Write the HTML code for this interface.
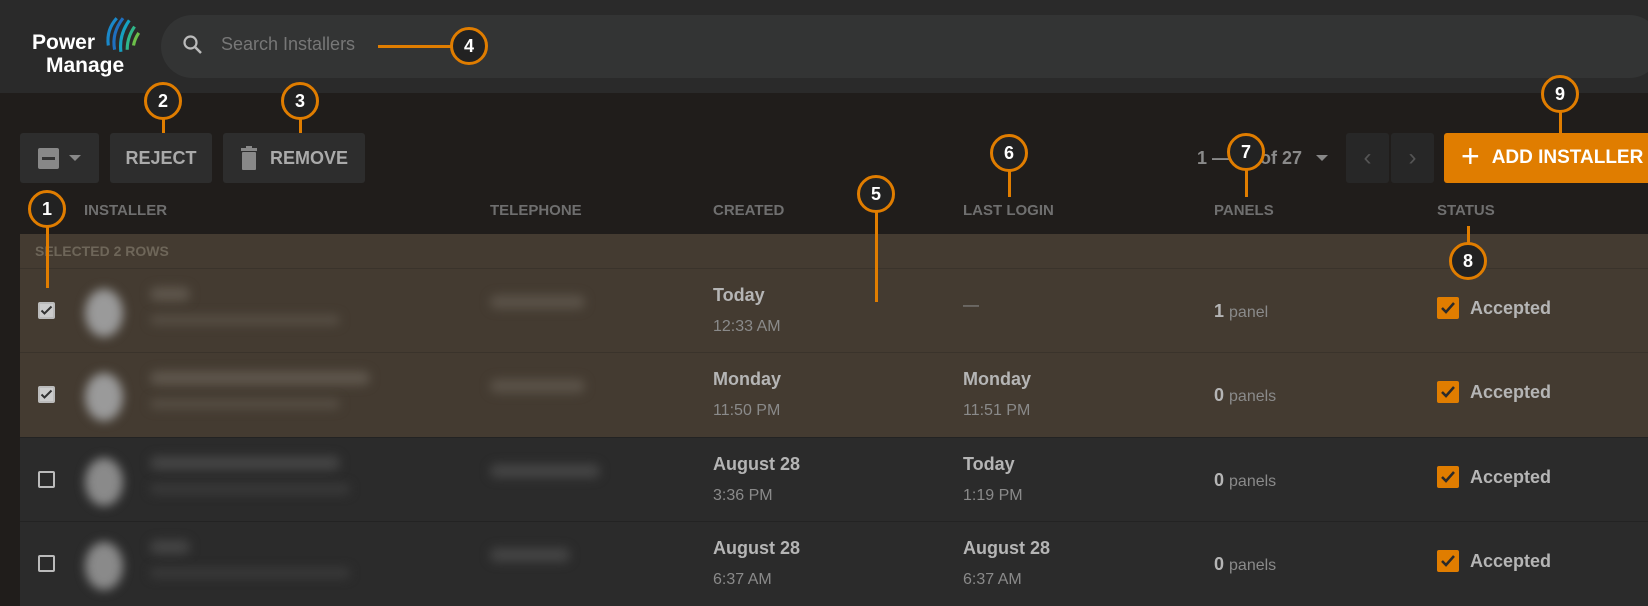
<!DOCTYPE html><html><head><style>
*{box-sizing:border-box;margin:0;padding:0}
body{width:1648px;height:606px;background:#201d1b;font-family:"Liberation Sans",sans-serif;position:relative;overflow:hidden;color:#bbb}
.a{position:absolute}
.hdr{left:0;top:0;width:1648px;height:93px;background:#2a2a2a}
.search{left:161px;top:15px;width:1500px;height:63px;background:#333434;border-radius:32px}
.btn{background:#2d2d2d;border-radius:3px;color:#aaa;font-weight:bold;font-size:18px;display:flex;align-items:center;justify-content:center}
.th{top:202px;font-size:15px;font-weight:bold;color:#6f6f6f}
.row{left:20px;width:1628px;height:85px;border-top:1px solid #3a332b}
.sel{background:#443b31}
.uns{background:#2b2b2b;border-top:1px solid #232323}
.cb{left:18px;width:17px;height:17px;border:2px solid #bbb;border-radius:2px}
.cb.on{background:#ccc;}
.blur{filter:blur(5px);background:#777;border-radius:10px}
.d1{font-size:18px;font-weight:bold;color:#b5b5b5}
.d2{font-size:16px;color:#8a8a8a;font-weight:normal}
.st{left:1437px;width:22px;height:22px;background:#e07d00;border-radius:2px}
.acc{left:1470px;font-size:18px;font-weight:bold;color:#b5b5b5}
.c{width:38px;height:38px;border:3px solid #e07d00;border-radius:50%;background:#222;color:#fff;font-weight:bold;font-size:18px;display:flex;align-items:center;justify-content:center}
.l{background:#e07d00}
</style></head><body>
<div class="a hdr"></div>
<div class="a" style="left:32px;top:31px;font-size:21px;font-weight:bold;color:#fff;line-height:23px">Power<br><span style="margin-left:14px">Manage</span></div>
<svg class="a" style="left:102px;top:14px" width="42" height="42" viewBox="0 0 40 40"><g fill="none" stroke-width="3"><path d="M6 30 Q4 15 14 4" stroke="#1a88c9"/><path d="M12 34 Q9 18 20 4" stroke="#1f6fbf"/><path d="M18 36 Q16 20 26 6" stroke="#16a0c0"/><path d="M24 34 Q24 22 31 12" stroke="#2fb68a"/><path d="M30 30 Q31 24 35 18" stroke="#6cc04a"/></g></svg>
<div class="a search"></div>
<svg class="a" style="left:182px;top:34px" width="22" height="22" viewBox="0 0 22 22"><circle cx="8.5" cy="8.5" r="6" fill="none" stroke="#bbb" stroke-width="2.2"/><path d="M13 13l6 6" stroke="#bbb" stroke-width="2.5"/></svg>
<div class="a" style="left:221px;top:34px;font-size:18px;color:#777">Search Installers</div>

<div class="a btn" style="left:20px;top:133px;width:79px;height:50px"><span style="width:21px;height:21px;background:#888;border-radius:2px;display:inline-flex;align-items:center;justify-content:center"><span style="width:13px;height:3px;background:#333"></span></span><span style="margin-left:10px;border:6px solid transparent;border-top:6px solid #888;margin-top:6px"></span></div>
<div class="a btn" style="left:110px;top:133px;width:102px;height:50px">REJECT</div>
<div class="a btn" style="left:223px;top:133px;width:142px;height:50px"><svg width="18" height="24" viewBox="0 0 18 24" style="margin-right:12px"><rect x="1" y="2" width="16" height="3" fill="#888"/><rect x="6" y="0" width="6" height="3" fill="#888"/><rect x="2" y="6" width="14" height="18" rx="1" fill="#888"/></svg>REMOVE</div>

<div class="a" style="left:1197px;top:148px;font-size:18px;font-weight:bold;color:#8a8a8a">1 — 20 of 27</div>
<div class="a" style="left:1316px;top:155px;border:6px solid transparent;border-top:6px solid #888"></div>
<div class="a btn" style="left:1346px;top:133px;width:43px;height:50px;background:#272727;color:#555;font-weight:normal;font-size:24px">‹</div>
<div class="a btn" style="left:1391px;top:133px;width:43px;height:50px;background:#272727;color:#555;font-weight:normal;font-size:24px">›</div>
<div class="a btn" style="left:1444px;top:133px;width:210px;height:50px;background:#e07d00;color:#fff;font-size:19px;justify-content:flex-start;padding-left:17px"><span style="font-size:32px;font-weight:normal;margin-right:12px;margin-top:-4px">+</span>ADD INSTALLER</div>

<div class="a th" style="left:84px">INSTALLER</div>
<div class="a th" style="left:490px">TELEPHONE</div>
<div class="a th" style="left:713px">CREATED</div>
<div class="a th" style="left:963px">LAST LOGIN</div>
<div class="a th" style="left:1214px">PANELS</div>
<div class="a th" style="left:1437px">STATUS</div>

<div class="a row sel" style="top:234px;height:34px;border:0"></div>
<div class="a" style="left:35px;top:243px;font-size:14px;font-weight:bold;color:#6e6659">SELECTED 2 ROWS</div>

<div class="a row sel" style="top:268px"><div class="a cb on" style="top:33px"><svg class="a" style="left:0;top:0" width="13" height="13" viewBox="0 0 13 13"><path d="M1.5 6.5l3 3 7-7" stroke="#333" stroke-width="2" fill="none"/></svg></div><div class="a blur" style="left:65px;top:20px;width:38px;height:48px;background:#9a9a9a;border-radius:50%"></div><div class="a blur" style="left:130px;top:18px;width:40px;height:14px;background:#5e564c"></div><div class="a blur" style="left:130px;top:46px;width:190px;height:10px;background:#564e44"></div><div class="a blur" style="left:470px;top:26px;width:95px;height:14px;background:#5a5248"></div><div class="a d1" style="left:693px;top:16px">Today</div><div class="a d2" style="left:693px;top:49px">12:33 AM</div><div class="a d2" style="left:943px;top:28px">—</div><div class="a d1" style="left:1194px;top:32px">1 <span class="d2">panel</span></div></div>
<div class="a row sel" style="top:352px"><div class="a cb on" style="top:33px"><svg class="a" style="left:0;top:0" width="13" height="13" viewBox="0 0 13 13"><path d="M1.5 6.5l3 3 7-7" stroke="#333" stroke-width="2" fill="none"/></svg></div><div class="a blur" style="left:65px;top:20px;width:38px;height:48px;background:#9a9a9a;border-radius:50%"></div><div class="a blur" style="left:130px;top:18px;width:220px;height:14px;background:#5e564c"></div><div class="a blur" style="left:130px;top:46px;width:190px;height:10px;background:#564e44"></div><div class="a blur" style="left:470px;top:26px;width:95px;height:14px;background:#5a5248"></div><div class="a d1" style="left:693px;top:16px">Monday</div><div class="a d2" style="left:693px;top:49px">11:50 PM</div><div class="a d1" style="left:943px;top:16px">Monday</div><div class="a d2" style="left:943px;top:49px">11:51 PM</div><div class="a d1" style="left:1194px;top:32px">0 <span class="d2">panels</span></div></div>
<div class="a row uns" style="top:437px"><div class="a cb" style="top:33px"></div><div class="a blur" style="left:65px;top:20px;width:38px;height:48px;background:#8a8a8a;border-radius:50%"></div><div class="a blur" style="left:130px;top:18px;width:190px;height:14px;background:#444"></div><div class="a blur" style="left:130px;top:46px;width:200px;height:10px;background:#3a3a3a"></div><div class="a blur" style="left:470px;top:26px;width:110px;height:14px;background:#444"></div><div class="a d1" style="left:693px;top:16px">August 28</div><div class="a d2" style="left:693px;top:49px">3:36 PM</div><div class="a d1" style="left:943px;top:16px">Today</div><div class="a d2" style="left:943px;top:49px">1:19 PM</div><div class="a d1" style="left:1194px;top:32px">0 <span class="d2">panels</span></div></div>
<div class="a row uns" style="top:521px"><div class="a cb" style="top:33px"></div><div class="a blur" style="left:65px;top:20px;width:38px;height:48px;background:#8a8a8a;border-radius:50%"></div><div class="a blur" style="left:130px;top:18px;width:40px;height:14px;background:#444"></div><div class="a blur" style="left:130px;top:46px;width:200px;height:10px;background:#3a3a3a"></div><div class="a blur" style="left:470px;top:26px;width:80px;height:14px;background:#444"></div><div class="a d1" style="left:693px;top:16px">August 28</div><div class="a d2" style="left:693px;top:49px">6:37 AM</div><div class="a d1" style="left:943px;top:16px">August 28</div><div class="a d2" style="left:943px;top:49px">6:37 AM</div><div class="a d1" style="left:1194px;top:32px">0 <span class="d2">panels</span></div></div>

<div class="a st" style="top:297px"></div><div class="a acc" style="top:298px">Accepted</div>
<div class="a st" style="top:381px"></div><div class="a acc" style="top:382px">Accepted</div>
<div class="a st" style="top:466px"></div><div class="a acc" style="top:467px">Accepted</div>
<div class="a st" style="top:550px"></div><div class="a acc" style="top:551px">Accepted</div>
<svg class="a" style="left:1437px;top:297px" width="22" height="280" viewBox="0 0 22 280"><g stroke="#2a2a2a" stroke-width="2.5" fill="none"><path d="M5 11l4 4 8-9"/><path d="M5 95l4 4 8-9"/><path d="M5 180l4 4 8-9"/><path d="M5 264l4 4 8-9"/></g></svg>

<!-- annotations -->
<div class="a l" style="left:46px;top:225px;width:3px;height:63px"></div>
<div class="a c" style="left:28px;top:190px">1</div>
<div class="a l" style="left:162px;top:115px;width:3px;height:18px"></div>
<div class="a c" style="left:144px;top:82px">2</div>
<div class="a l" style="left:299px;top:115px;width:3px;height:18px"></div>
<div class="a c" style="left:281px;top:82px">3</div>
<div class="a l" style="left:378px;top:45px;width:74px;height:3px"></div>
<div class="a c" style="left:450px;top:27px">4</div>
<div class="a l" style="left:875px;top:210px;width:3px;height:92px"></div>
<div class="a c" style="left:857px;top:175px">5</div>
<div class="a l" style="left:1008px;top:170px;width:3px;height:27px"></div>
<div class="a c" style="left:990px;top:134px">6</div>
<div class="a l" style="left:1245px;top:170px;width:3px;height:27px"></div>
<div class="a c" style="left:1227px;top:133px">7</div>
<div class="a l" style="left:1467px;top:226px;width:3px;height:20px"></div>
<div class="a c" style="left:1449px;top:242px">8</div>
<div class="a l" style="left:1559px;top:110px;width:3px;height:23px"></div>
<div class="a c" style="left:1541px;top:75px">9</div>
</body></html>
